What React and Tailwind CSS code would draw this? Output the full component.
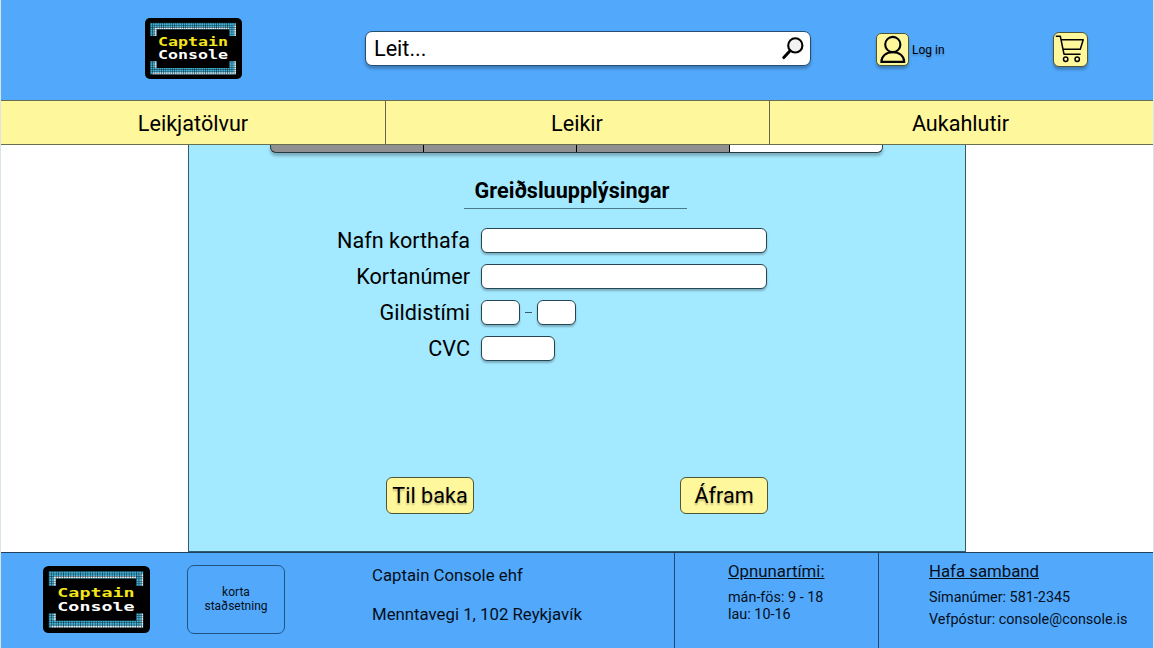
import React from "react";

const FRAME_TOP = "M5 4.7H91V18H84.4V11.3H11.6V18H5Z";
const FRAME_BOTTOM = "M5 43.2H11.6V49.9H84.4V43.2H91V56.5H5Z";

function Logo({ id, className }) {
  const grid = `${id}-grid`;
  const clip = `${id}-clip`;
  return (
    <svg viewBox="0 0 97 61" preserveAspectRatio="none" className={className} role="img">
      <defs>
        <pattern id={grid} x="5" y="4.7" width="2.205" height="2.215" patternUnits="userSpaceOnUse">
          <path d="M0 0H2.205M0 0V2.215" stroke="#04141c" strokeWidth="0.8" />
        </pattern>
        <clipPath id={clip}>
          <path d={FRAME_TOP} />
          <path d={FRAME_BOTTOM} />
        </clipPath>
      </defs>
      <rect width="97" height="61" rx="5" fill="#000" />
      <g clipPath={`url(#${clip})`}>
        <rect x="5" y="4.7" width="86.6" height="51.8" fill="#43b4da" />
        <path d="M10.5 18V10.2H84.4M89.9 6.9V18M10.5 43.2V49.9M89.9 43.2V55.4H7.2" fill="none" stroke="#e6f3f7" strokeWidth="2" />
        <rect x="5" y="4.7" width="86.6" height="51.8" fill={`url(#${grid})`} />
      </g>
      <g fontFamily="'DejaVu Sans Mono', monospace" fontWeight="700" fontSize="11.5">
        <text x="13" y="28.4" textLength="70" lengthAdjust="spacingAndGlyphs" fill="#f5e61c">Captain</text>
        <text x="13" y="40.6" textLength="70" lengthAdjust="spacingAndGlyphs" fill="#fff">Console</text>
      </g>
    </svg>
  );
}

function Field({ label, children }) {
  return (
    <div className="flex h-9 items-center">
      <label className="mr-[11px] w-[281px] shrink-0 pt-0.5 text-right text-[21.6px] leading-6">{label}</label>
      {children}
    </div>
  );
}

const inputClass = "h-[25px] rounded-[6px] border border-[#264653] bg-white shadow-[0_2px_2px_rgba(0,0,0,0.25)] outline-none";
const buttonClass = "flex h-[37px] w-[88px] items-center justify-center rounded-[6px] border border-[#4c5535] bg-[#fff79c] text-[21.6px] leading-6 [text-shadow:0_2px_2px_rgba(0,0,0,0.25)]";

export default function App() {
  return (
    <div className="flex h-[648px] w-[1154px] flex-col overflow-hidden border-x border-[#dbe3ea] bg-white font-[Roboto,sans-serif] text-black">
      <header className="flex h-[100px] shrink-0 items-start bg-[#52a9fc]">
        <Logo id="top" className="mt-[18px] ml-36 h-[61px] w-[97px] shrink-0" />
        <div className="mt-[31px] ml-[123px] flex h-[35px] w-[446px] shrink-0 items-center justify-between rounded-[7px] border border-[#264d73] bg-white pr-[3px] pl-2 shadow-[0_3px_3px_rgba(0,0,0,0.25)]">
          <span className="text-[21.6px] leading-6">Leit...</span>
          <svg className="h-7 w-7" viewBox="0 0 28 28" fill="none" stroke="#000">
            <circle cx="16.3" cy="10.4" r="7.1" fill="#f2f2f2" strokeWidth="2.1" />
            <path d="M11.1 15.8L4.8 22.6" strokeWidth="3" strokeLinecap="round" />
          </svg>
        </div>
        <button className="mt-[33px] ml-[65px] flex shrink-0 items-center">
          <span className="flex h-[33px] w-[33px] items-center justify-center rounded-[5px] border border-[#4c5535] bg-[#fff79c] shadow-[0_3px_3px_rgba(0,0,0,0.25)]">
            <svg className="h-[31px] w-[31px]" viewBox="0 0 31 31" fill="none" stroke="#000" strokeWidth="2.1">
              <circle cx="15.8" cy="10.5" r="7.6" />
              <path d="M4.4 27.9C4.4 22 9.4 18.1 15.8 18.1S27.2 22 27.2 27.9Z" />
            </svg>
          </span>
          <span className="ml-[3px] w-8 text-[12px] leading-4 whitespace-nowrap [text-shadow:0_2px_2px_rgba(0,0,0,0.25)]">Log in</span>
        </button>
        <button className="mt-8 ml-[109px] flex h-[35px] w-[35px] shrink-0 items-center justify-center rounded-[6px] border border-[#4c5535] bg-[#fff79c] shadow-[0_3px_3px_rgba(0,0,0,0.25)]">
          <svg className="h-[33px] w-[33px]" viewBox="0 0 33 33" fill="none" stroke="#000" strokeWidth="1.5">
            <path d="M1.8 3.2H6.3L10 21.2H26.6M7.2 6.7H29.2L26.3 16.3H9" strokeLinejoin="round" />
            <circle cx="11.7" cy="26.2" r="2.2" />
            <circle cx="23.2" cy="26.2" r="2.2" />
          </svg>
        </button>
      </header>

      <nav className="grid h-[45px] shrink-0 grid-cols-[385px_384px_383px] border-y border-[#686f4e] bg-[#fff79c] text-[21.6px] leading-6">
        <a className="flex items-center justify-center border-r border-[#626548] pt-0.5">Leikjatölvur</a>
        <a className="flex items-center justify-center border-r border-[#626548] pt-0.5 pr-px">Leikir</a>
        <a className="flex items-center justify-center pt-0.5 pr-0.5">Aukahlutir</a>
      </nav>

      <main className="mx-auto flex h-[407px] w-[778px] shrink-0 flex-col border-x border-b border-[#315c6b] bg-[#a3e9ff]">
        <div className="ml-[81px] flex h-[8px] w-[613px] shrink-0 rounded-b-[6px] border border-t-0 border-[#263a40] bg-[#909090] shadow-[0_3px_3px_rgba(0,0,0,0.25)]">
          <div className="w-[153px] border-r border-black" />
          <div className="w-[153px] border-r border-black" />
          <div className="w-[153px] border-r border-black" />
          <div className="flex-1 rounded-br-[5px] bg-white" />
        </div>
        <h1 className="mt-[26px] ml-[275px] h-[30px] w-[223px] shrink-0 border-b border-[#4a7988] pr-[7px] text-center text-[21.6px] leading-6 font-bold">Greiðsluupplýsingar</h1>
        <form className="mt-[13px] flex flex-col">
          <Field label="Nafn korthafa"><input className={`${inputClass} w-[286px]`} /></Field>
          <Field label="Kortanúmer"><input className={`${inputClass} w-[286px]`} /></Field>
          <Field label="Gildistími">
            <input className={`${inputClass} w-[39px]`} />
            <span className="mr-[5px] ml-[5px] h-px w-[7px] bg-[#345d68]" />
            <input className={`${inputClass} w-[39px]`} />
          </Field>
          <Field label="CVC"><input className={`${inputClass} w-[74px]`} /></Field>
        </form>
        <div className="mt-[111px] ml-[197px] flex w-[382px] justify-between">
          <button className={buttonClass}>Til baka</button>
          <button className={buttonClass}>Áfram</button>
        </div>
      </main>

      <footer className="flex h-24 shrink-0 border-t border-[#20405f] bg-[#52a9fc] text-[#050e18]">
        <Logo id="bottom" className="mt-[13px] ml-[42px] h-[67px] w-[107px] shrink-0" />
        <div className="mt-3 ml-[37px] flex h-[69px] w-[98px] shrink-0 items-center justify-center rounded-[7px] border border-[#215485] pb-px text-center text-[12px] leading-[14px]">
          <p>korta<br />staðsetning</p>
        </div>
        <div className="ml-[87px] w-[302px] shrink-0 pt-[11px] text-[16.8px] leading-[22px]">
          <p>Captain Console ehf</p>
          <p className="mt-[17px]">Menntavegi 1, 102 Reykjavík</p>
        </div>
        <div className="w-[205px] shrink-0 border-x border-[#1d4a76] pt-[7px] pl-[53px] text-[14.4px] leading-[17px]">
          <h2 className="mb-[7px] text-[16.8px] leading-[22px] underline">Opnunartími:</h2>
          <p>mán-fös: 9 - 18</p>
          <p>lau: 10-16</p>
        </div>
        <div className="flex-1 pt-[7px] pl-[50px] text-[14.4px] leading-[22px] whitespace-nowrap">
          <h2 className="mb-[5px] text-[16.8px] leading-[22px] underline">Hafa samband</h2>
          <p>Símanúmer: 581-2345</p>
          <p>Vefpóstur: console@console.is</p>
        </div>
      </footer>
    </div>
  );
}
